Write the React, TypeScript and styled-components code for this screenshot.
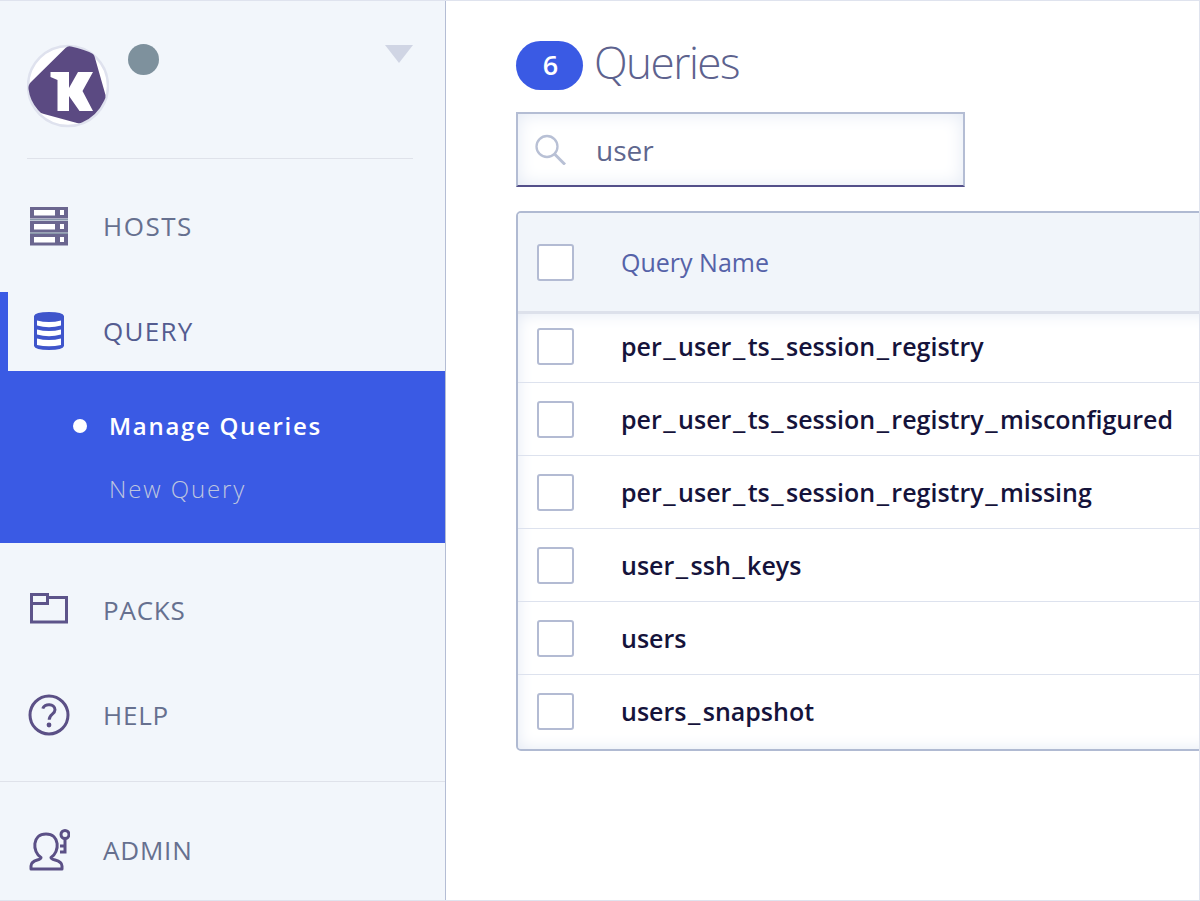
import React from "react";
import styled, { createGlobalStyle } from "styled-components";

const GlobalStyle = createGlobalStyle`
  * { box-sizing: border-box; }
  body { margin: 0; background: #fff; font-family: "Open Sans", "Noto Sans", sans-serif; }
`;

const Page = styled.div`
  display: flex;
  width: 1200px;
  height: 901px;
  overflow: hidden;
  border: 1px solid #dfe3ee;
  border-left: 0;
`;

const Sidebar = styled.aside`
  display: flex;
  flex-direction: column;
  flex: none;
  width: 446px;
  background: #f2f6fb;
  border-right: 1px solid #b4bdd4;
`;

const Account = styled.header`
  display: flex;
  align-items: flex-start;
  height: 158px;
  margin: 0 32px 0 27px;
  padding-top: 43px;
  border-bottom: 1px solid #dfe2ea;
`;

const Status = styled.span`
  width: 31px;
  height: 31px;
  margin-left: 19px;
  border-radius: 50%;
  background: #7e919d;
`;

const Caret = styled.svg`
  margin: 1px 0 0 auto;
`;

const Item = styled.a<{ $active?: boolean; $gap: number; $lift?: number }>`
  display: flex;
  align-items: center;
  flex: none;
  height: 79px;
  margin-top: ${(p) => p.$gap}px;
  padding-bottom: ${(p) => p.$lift ?? 2}px;
  padding-left: ${(p) => (p.$active ? 20 : 28)}px;
  border-left: ${(p) => (p.$active ? "8px solid #3a5ae4" : "0")};
  color: ${(p) => (p.$active ? "#545c90" : "#66708f")};

  svg { flex: none; }
`;

const Label = styled.span<{ $spacing?: number }>`
  margin-left: 33px;
  font-size: 26px;
  letter-spacing: ${(p) => p.$spacing ?? 0.8}px;
  line-height: 36px;
`;

const Submenu = styled.div`
  display: flex;
  flex-direction: column;
  flex: none;
  gap: 27px;
  height: 172px;
  padding: 36px 0 0 73px;
  background: #3a5ae4;
`;

const SubLink = styled.a<{ $current?: boolean }>`
  display: flex;
  align-items: center;
  gap: 22px;
  height: 36px;
  color: ${(p) => (p.$current ? "#fff" : "#bec6df")};
  font-size: 24px;
  font-weight: ${(p) => (p.$current ? 600 : 300)};
  letter-spacing: ${(p) => (p.$current ? 1.7 : 1.9)}px;

  &::before {
    content: "";
    width: 14px;
    height: 14px;
    margin-top: 1px;
    border-radius: 50%;
    background: ${(p) => (p.$current ? "#fff" : "transparent")};
  }
`;

const Rule = styled.hr`
  flex: none;
  width: 100%;
  height: 1px;
  margin: 26px 0 0;
  border: 0;
  background: #dfe2ea;
`;

const Main = styled.main`
  flex: 1;
  min-width: 0;
  padding: 40px 0 0 70px;
`;

const Heading = styled.div`
  display: flex;
  align-items: center;
  gap: 11px;
  height: 49px;
`;

const Count = styled.span`
  display: grid;
  place-items: center;
  width: 67px;
  height: 49px;
  padding: 0 0 2px 2px;
  border-radius: 25px;
  background: #3a5ae4;
  color: #fff;
  font-size: 27px;
  font-weight: 600;
`;

const Title = styled.h1`
  margin: -7px 0 0;
  color: #5d628e;
  font-size: 44px;
  font-weight: 300;
  letter-spacing: -1.5px;
  line-height: 49px;
`;

const Search = styled.label`
  display: flex;
  align-items: center;
  width: 449px;
  height: 75px;
  margin-top: 22px;
  padding-left: 17px;
  border: 2px solid #b4bdd4;
  border-bottom-color: #54508a;
  box-shadow: inset 0 0 18px #e3e9f4;
  color: #5f678e;
  font-size: 28px;

  span { margin: 0 0 0 30px; }
`;

const Table = styled.section`
  width: 700px;
  height: 540px;
  margin-top: 24px;
  overflow: hidden;
  border: 2px solid #b0bad2;
  border-radius: 5px;
`;

const TableHead = styled.div`
  display: flex;
  align-items: center;
  height: 101px;
  padding: 1px 0 0 19px;
  background: #f1f5fa;
  border-bottom: 3px solid #dde1eb;
  color: #5562a8;
  font-size: 25px;
`;

const Rows = styled.div`
  height: 435px;
  box-shadow: inset 0 0 16px #e3e9f4;
`;

const Row = styled.div`
  display: flex;
  align-items: center;
  height: 73px;
  padding-left: 19px;
  border-bottom: 1px solid #dde2ee;
  color: #15133b;
  font-size: 25px;
  font-weight: 600;

  &:first-child { height: 69px; padding-bottom: 3px; }
  &:last-child { border-bottom: 0; }
`;

const Checkbox = styled.span`
  flex: none;
  width: 37px;
  height: 37px;
  margin-right: 47px;
  border: 2px solid #b3bbd3;
  border-radius: 3px;
  background: #fff;
`;

const Cell = styled.span<{ $heading?: boolean }>`
  padding-bottom: ${(p) => (p.$heading ? 2 : 1)}px;
  line-height: 36px;
  white-space: nowrap;
`;

const Underscore = styled.span`
  margin: 0 2.4px 0 1.6px;
  font-size: 29px;
  line-height: 0;
`;

const Logo = () => (
  <svg width="82" height="84" viewBox="0 0 82 84">
    <circle cx="41" cy="42" r="40" fill="#fff" stroke="#dfe2ee" strokeWidth="2.5" />
    <path d="M38.5 4Q41 1.500 44 2.500Q57 5 66 10Q67.500 11.500 68 14L78.500 51Q79 54 77 57Q70 72 55 78.500Q53 79.500 50 79L17 70Q13 69 11 66Q3 57 1.500 45Q1 41 4 38Z" fill="#5b4a82" />
    <path d="M23.500 28H42V44L51 28H66L55.500 47L66 67H52.500L42 52V67H30.500V36L23.500 33Z" fill="#fff" />
  </svg>
);

const HostsIcon = () => (
  <svg width="42" height="42" viewBox="0 0 42 42" fill="none">
    {[2, 16, 29].map((y) => (
      <g key={y}>
        <rect x="2" y={y} width="38" height="11.5" fill="#6b668f" />
        <rect x="6" y={y + 3} width="21" height="5.5" fill="#fff" />
        <rect x="32" y={y + 3} width="4" height="5" fill="#fff" />
      </g>
    ))}
    <path d="M2 14.7h38M2 28.3h38" stroke="#8998aa" strokeWidth="1.4" />
  </svg>
);

const QueryIcon = () => (
  <svg width="42" height="42" viewBox="0 0 42 42">
    <path d="M6 6Q7 2 21 2T36 6V36Q35 40 21 40T6 36Z" fill="#3f55cb" />
    <path d="M9 10.500Q21 13.500 33 10.500V15.500Q21 19 9 15.500ZM9 19.500Q21 22.500 33 19.500V24.500Q21 28 9 24.500ZM9 28.500Q21 31.500 33 28.500V35Q21 37.500 9 35Z" fill="#fff" />
  </svg>
);

const PacksIcon = () => (
  <svg width="42" height="42" viewBox="0 0 42 42" fill="none" stroke="#5d548a" strokeWidth="3">
    <path d="M3.500 5.500h16v9h-16zM3.500 5v28h35V8.500H20" />
  </svg>
);

const HelpIcon = () => (
  <svg width="42" height="42" viewBox="0 0 42 42" fill="none" stroke="#5b5086" strokeWidth="3">
    <circle cx="21" cy="21" r="19" />
    <path d="M14.8 14.7C16.2 9 27 9.3 27 15.8C27 20.5 21.2 19.8 21.2 25.7" />
    <circle cx="21" cy="31" r="2.4" fill="#5b5086" stroke="none" />
  </svg>
);

const AdminIcon = () => (
  <svg width="42" height="44" viewBox="0 0 42 44" fill="none" stroke="#5b5086" strokeWidth="3">
    <path d="M13 29.5C4 24 4 6 18 6S32 24 23 29.5C23 33 34 31 34 38V41H3V38C3 31 13 33 13 29.5Z" strokeLinejoin="round" />
    <circle cx="37" cy="6.500" r="4" />
    <path d="M37 11V24H32M37 18H32" />
  </svg>
);

const SearchIcon = () => (
  <svg width="31" height="31" viewBox="0 0 31 31" fill="none" stroke="#b8c0d5" strokeWidth="2.3">
    <circle cx="12" cy="12.500" r="10.5" />
    <path d="M19 19.500L30 30.500" strokeWidth="3" />
  </svg>
);

const queries = [
  "per_user_ts_session_registry",
  "per_user_ts_session_registry_misconfigured",
  "per_user_ts_session_registry_missing",
  "user_ssh_keys",
  "users",
  "users_snapshot",
];

const QueryName = ({ name }: { name: string }) => (
  <Cell>
    {name.split("_").map((part, i) => (
      <React.Fragment key={i}>
        {i > 0 && <Underscore>_</Underscore>}
        {part}
      </React.Fragment>
    ))}
  </Cell>
);

export default function App() {
  return (
    <Page>
      <GlobalStyle />
      <Sidebar>
        <Account>
          <Logo />
          <Status />
          <Caret width="28" height="18" viewBox="0 0 28 18">
            <path d="M0 0H28L14 18Z" fill="#d0d5e4" />
          </Caret>
        </Account>
        <Item $gap={28}><HostsIcon /><Label $spacing={1.5}>HOSTS</Label></Item>
        <Item $gap={26} $active><QueryIcon /><Label $spacing={1.3}>QUERY</Label></Item>
        <Submenu>
          <SubLink $current>Manage Queries</SubLink>
          <SubLink>New Query</SubLink>
        </Submenu>
        <Item $gap={28}><PacksIcon /><Label>PACKS</Label></Item>
        <Item $gap={26}><HelpIcon /><Label>HELP</Label></Item>
        <Rule />
        <Item $gap={28} $lift={0}><AdminIcon /><Label>ADMIN</Label></Item>
      </Sidebar>
      <Main>
        <Heading>
          <Count>6</Count>
          <Title>Queries</Title>
        </Heading>
        <Search><SearchIcon /><span>user</span></Search>
        <Table>
          <TableHead><Checkbox /><Cell $heading>Query Name</Cell></TableHead>
          <Rows>
            {queries.map((name) => (
              <Row key={name}><Checkbox /><QueryName name={name} /></Row>
            ))}
          </Rows>
        </Table>
      </Main>
    </Page>
  );
}
